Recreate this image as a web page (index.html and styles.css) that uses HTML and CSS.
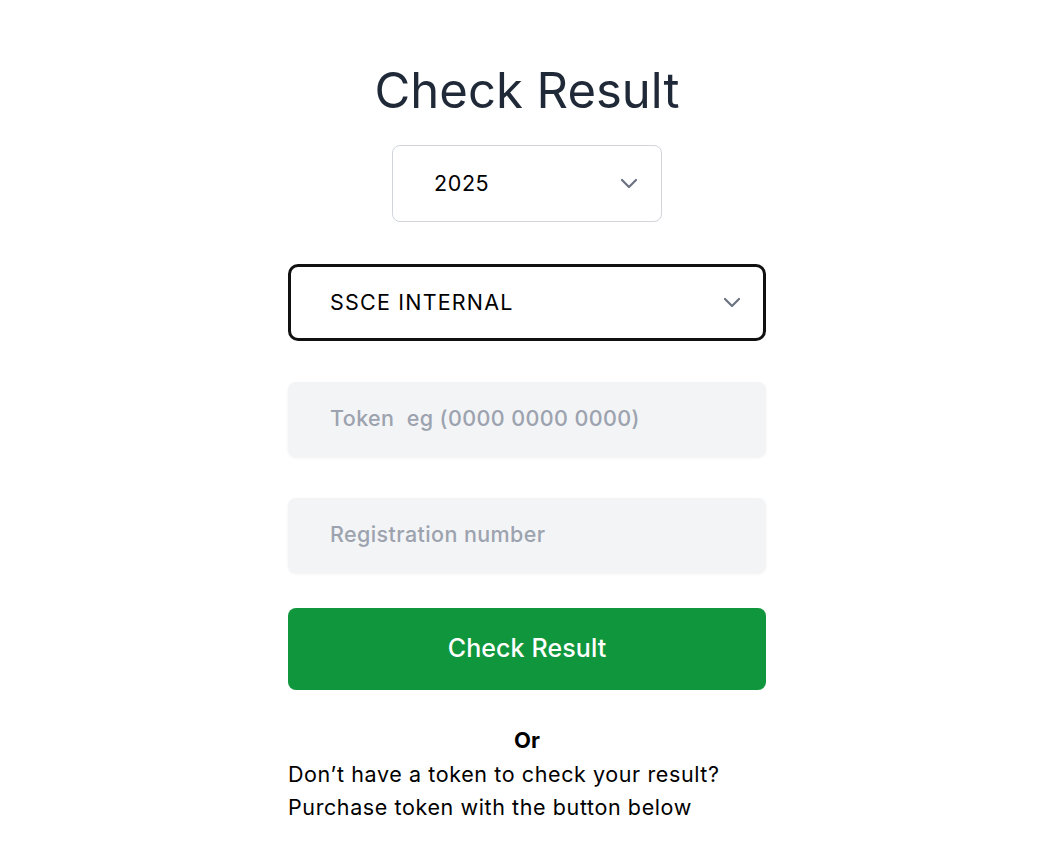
FILE: index.html
```html
<!DOCTYPE html>
<html lang="en">
<head>
<meta charset="utf-8">
<title>Check Result</title>
<link rel="stylesheet" href="styles.css">
</head>
<body>
<main class="page">
  <h1 class="title">Check Result</h1>
  <div class="year-wrap">
    <div class="select select-year">
      <span class="select-value">2025</span>
      <svg class="chev" width="18" height="11" viewBox="0 0 18 11"><path d="M2 2l7 7 7-7" fill="none" stroke="#6b7280" stroke-width="2.2" stroke-linecap="round" stroke-linejoin="round"/></svg>
    </div>
  </div>
  <form class="form">
    <div class="select select-type">
      <span class="select-value">SSCE INTERNAL</span>
      <svg class="chev" width="18" height="11" viewBox="0 0 18 11"><path d="M2 2l7 7 7-7" fill="none" stroke="#6b7280" stroke-width="2.2" stroke-linecap="round" stroke-linejoin="round"/></svg>
    </div>
    <input class="field" type="text" placeholder="Token  eg (0000 0000 0000)">
    <input class="field" type="text" placeholder="Registration number">
    <button class="btn" type="button">Check Result</button>
  </form>
  <p class="or">Or</p>
  <p class="info">Don’t have a token to check your result?<br>Purchase token with the button below</p>
</main>
</body>
</html>
```
FILE: styles.css
```css
* { box-sizing: border-box; }
body {
  margin: 0;
  padding-right: 3px;
  background: #fff;
  font-family: Inter, "Noto Sans", sans-serif;
  color: #000;
}
.page {
  width: 478px;
  margin: 0 auto;
  padding-top: 60px;
  display: flex;
  flex-direction: column;
}
.title {
  margin: 0;
  text-align: center;
  font-size: 49px;
  font-weight: 400;
  line-height: 62px;
  color: #1f2937;
}
.year-wrap {
  display: flex;
  justify-content: center;
  margin-top: 23px;
}
.select {
  display: flex;
  align-items: center;
  justify-content: space-between;
  background: #fff;
}
.select-year {
  width: 270px;
  height: 77px;
  border: 1px solid #d1d5db;
  border-radius: 8px;
  padding: 0 23px 0 41px;
}
.select-type {
  width: 478px;
  height: 77px;
  border: 3px solid #111;
  border-radius: 10px;
  padding: 0 22px 0 39px;
}
.select-value {
  font-size: 21.5px;
  font-weight: 400;
  letter-spacing: 0.6px;
  color: #000;
  margin-top: -2px;
}
.select-type .select-value { letter-spacing: 1.2px; }
.form {
  margin-top: 42px;
  display: flex;
  flex-direction: column;
}
.field {
  width: 100%;
  height: 75px;
  margin-top: 41px;
  border: none;
  outline: none;
  border-radius: 8px;
  background: #f3f4f6;
  box-shadow: 0 1px 3px rgba(0,0,0,0.06);
  padding: 0 42px 3px;
  font-family: inherit;
  font-size: 21.5px;
  font-weight: 500;
  letter-spacing: 0.4px;
  color: #111;
}
.field::placeholder { color: #9ca3af; }
.btn {
  margin-top: 35px;
  height: 82px;
  border: none;
  border-radius: 8px;
  background: #10973d;
  color: #fff;
  font-family: inherit;
  font-size: 25px;
  font-weight: 500;
  letter-spacing: 0.1px;
  padding-bottom: 3px;
}
.or {
  margin: 35px 0 0;
  text-align: center;
  font-weight: 700;
  font-size: 22px;
  line-height: 30px;
}
.info {
  margin: 3px 0 0;
  font-size: 21.5px;
  font-weight: 400;
  letter-spacing: 0.6px;
  line-height: 33px;
}
```
